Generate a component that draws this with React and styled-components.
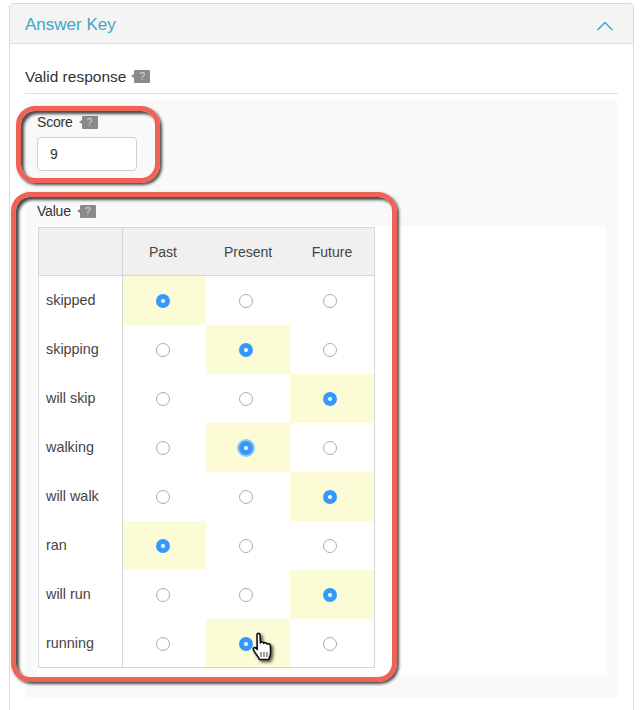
import React from 'react';
import styled, { createGlobalStyle } from 'styled-components';

const GlobalStyle = createGlobalStyle`
    html, body {
        margin: 0;
        padding: 0;
        background: #fff;
        font-family: "Liberation Sans", Arial, sans-serif;
        color: #333;
    }
`;

const columns = ['Past', 'Present', 'Future'];

const rows = [
    { label: 'skipped', answer: 0 },
    { label: 'skipping', answer: 1 },
    { label: 'will skip', answer: 2 },
    { label: 'walking', answer: 1, focused: true },
    { label: 'will walk', answer: 2 },
    { label: 'ran', answer: 0 },
    { label: 'will run', answer: 2 },
    { label: 'running', answer: 1, pointer: true },
];

const HelpTag = () => <Tag>?</Tag>;

const Chevron = () => (
    <ChevronIcon width="16" height="10" viewBox="0 0 16 10" fill="none">
        <path d="M0.6 9 L8 1.5 L15.4 9" stroke="#3ea6c9" strokeWidth="1.5" />
    </ChevronIcon>
);

const HandCursor = () => (
    <HandIcon width="24" height="32" viewBox="0 0 24 32">
        <path
            d="M5 2.5 C5 1 8 1 8 2.5 L8.4 11 C9 9.6 11.4 9.6 11.8 11.4 C12.6 10.2 14.8 10.4 15.2 12.2 C16.2 11.2 18.2 11.8 18.4 13.6 L18.6 20 C18.6 24 17.4 25.5 16.6 27.5 L7.6 27.5 C6.6 24.5 2.6 21 1.4 17.8 C0.8 16 2.8 14.8 4.4 16.4 L5.2 17.4 Z"
            fill="#fff"
            stroke="#111"
            strokeWidth="1.6"
            strokeLinejoin="round"
        />
        <path d="M9 20 V25 M12 20 V25 M15 20 V25" stroke="#111" strokeWidth="0.8" />
    </HandIcon>
);

const App = () => {
    return (
        <Page>
            <GlobalStyle />
            <Panel>
                <PanelHeader>
                    <PanelTitle>Answer Key</PanelTitle>
                    <Chevron />
                </PanelHeader>
                <PanelBody>
                    <SectionTitle>
                        Valid response <HelpTag />
                    </SectionTitle>
                    <GreyBox>
                        <ScoreField>
                            <Highlight $top={-8} $left={-21} $width={144} $height={77} />
                            <FieldLabel>
                                Score <HelpTag />
                            </FieldLabel>
                            <ScoreInput>9</ScoreInput>
                        </ScoreField>
                        <ValueField>
                            <Highlight $top={-11} $left={-26} $width={386} $height={490} />
                            <ValueLabel>
                                Value <HelpTag />
                            </ValueLabel>
                            <WhiteBox>
                                <Grid>
                                    <thead>
                                        <tr>
                                            <CornerCell />
                                            {columns.map((name) => (
                                                <HeadCell key={name}>{name}</HeadCell>
                                            ))}
                                        </tr>
                                    </thead>
                                    <tbody>
                                        {rows.map((row) => (
                                            <tr key={row.label}>
                                                <LabelCell>{row.label}</LabelCell>
                                                {columns.map((name, index) => (
                                                    <OptionCell key={name} $correct={row.answer === index}>
                                                        <Radio
                                                            $checked={row.answer === index}
                                                            $focused={row.focused && row.answer === index}
                                                        />
                                                        {row.pointer && row.answer === index && <HandCursor />}
                                                    </OptionCell>
                                                ))}
                                            </tr>
                                        ))}
                                    </tbody>
                                </Grid>
                            </WhiteBox>
                        </ValueField>
                    </GreyBox>
                </PanelBody>
            </Panel>
        </Page>
    );
};

export default App;

const Page = styled.div`
    width: 644px;
    height: 710px;
    overflow: hidden;
    padding: 3px 10px 0 9px;
    box-sizing: border-box;
`;

const Panel = styled.section`
    height: 760px;
    border: 1px solid #d9d9d9;
    border-radius: 4px 4px 0 0;
    box-sizing: border-box;
`;

const PanelHeader = styled.header`
    height: 40px;
    box-sizing: border-box;
    background: #f4f4f4;
    border-bottom: 1px solid #dcdcdc;
    display: flex;
    align-items: center;
    justify-content: space-between;
    padding: 3px 20px 0 15px;
`;

const ChevronIcon = styled.svg`
    margin-top: 2px;
`;

const PanelTitle = styled.h2`
    margin: 0;
    font-size: 17px;
    font-weight: 400;
    color: #3ea6c9;
`;

const PanelBody = styled.div`
    padding: 0 15px;
`;

const SectionTitle = styled.div`
    height: 50px;
    box-sizing: border-box;
    padding-top: 24px;
    border-bottom: 1px solid #dddddd;
    font-size: 15.5px;
    line-height: 18px;
    display: flex;
    align-items: flex-start;
    gap: 8px;

    & > span {
        margin-top: 2px;
    }
`;

const Tag = styled.span`
    position: relative;
    display: inline-block;
    width: 16px;
    height: 13px;
    border-radius: 1px;
    background: #8a8a8a;
    color: #d8d8d8;
    font-size: 10px;
    letter-spacing: 0;
    line-height: 13px;
    text-align: center;

    &::before {
        content: '';
        position: absolute;
        left: -3px;
        top: 4px;
        border-style: solid;
        border-width: 2.5px 3px 2.5px 0;
        border-color: transparent #8a8a8a transparent transparent;
    }
`;

const GreyBox = styled.div`
    margin-top: 6px;
    height: 598px;
    box-sizing: border-box;
    padding: 14px 12px 0 12px;
    background: #f9f9f9;
    border-radius: 4px;
`;

const ScoreField = styled.div`
    position: relative;
    height: 89px;
`;

const ValueField = styled.div`
    position: relative;
`;

const Highlight = styled.div`
    position: absolute;
    top: ${(props) => props.$top}px;
    left: ${(props) => props.$left}px;
    width: ${(props) => props.$width}px;
    height: ${(props) => props.$height}px;
    box-sizing: border-box;
    border: 5px solid #ef6256;
    border-radius: 19px;
    box-shadow:
        2px 2px 3px rgba(30, 30, 30, 0.8),
        inset 3px 3px 3px rgba(30, 30, 30, 0.8);
    pointer-events: none;
    z-index: 2;
`;

const FieldLabel = styled.div`
    font-size: 14px;
    letter-spacing: -0.2px;
    line-height: 16px;
    display: flex;
    align-items: center;
    gap: 9px;
`;

const ValueLabel = styled(FieldLabel)`
    height: 16px;
`;

const ScoreInput = styled.div`
    margin-top: 7px;
    width: 100px;
    height: 34px;
    box-sizing: border-box;
    border: 1px solid #cfcfcf;
    border-radius: 4px;
    background: #fff;
    padding-left: 12px;
    font-size: 14px;
    line-height: 32px;
`;

const WhiteBox = styled.div`
    margin-top: 7px;
    height: 449px;
    background: #fff;
    padding-top: 1px;
    box-sizing: border-box;
`;

const Grid = styled.table`
    border-collapse: collapse;
    table-layout: fixed;
    width: 337px;
    margin-left: 1px;
    font-size: 14.4px;
    color: #444;
    background: #fff;
`;

const CornerCell = styled.th`
    width: 83px;
    height: 47px;
    padding: 0;
    background: #f0f0f0;
    border: 1px solid #d6d6d6;
`;

const HeadCell = styled.th`
    padding: 0;
    font-weight: 400;
    font-size: 14px;
    text-align: center;
    background: #f0f0f0;
    border-top: 1px solid #d6d6d6;
    border-bottom: 1px solid #d6d6d6;
    border-right: 1px solid #d6d6d6;

    &:nth-child(2) {
        width: 80px;
        padding-right: 3px;
    }
    &:nth-child(3) {
        width: 84px;
    }
    &:not(:last-child) {
        border-right: 0;
    }
`;

const LabelCell = styled.td`
    height: 49px;
    padding: 0 0 0 7px;
    box-sizing: border-box;
    border-left: 1px solid #d6d6d6;
    border-right: 1px solid #d6d6d6;
    tr:last-child & {
        border-bottom: 1px solid #d6d6d6;
    }
`;

const OptionCell = styled.td`
    position: relative;
    padding: 0 4px 0 0;
    text-align: center;
    background: ${(props) => (props.$correct ? '#fbfbd5' : '#fff')};
    tr:last-child & {
        border-bottom: 1px solid #d6d6d6;
    }
    &:last-child {
        border-right: 1px solid #d6d6d6;
    }
`;

const Radio = styled.span`
    display: inline-block;
    vertical-align: middle;
    width: 14px;
    height: 14px;
    box-sizing: border-box;
    border-radius: 50%;
    border: ${(props) => (props.$checked ? '5px solid #3399ff' : '1px solid #adadad')};
    background: #fff;
    box-shadow: ${(props) => (props.$focused ? '0 0 0 2px rgba(51, 153, 255, 0.5)' : 'none')};
`;

const HandIcon = styled.svg`
    position: absolute;
    left: 46px;
    top: 13px;
    filter: drop-shadow(2px 2px 1.5px rgba(0, 0, 0, 0.65));
`;
